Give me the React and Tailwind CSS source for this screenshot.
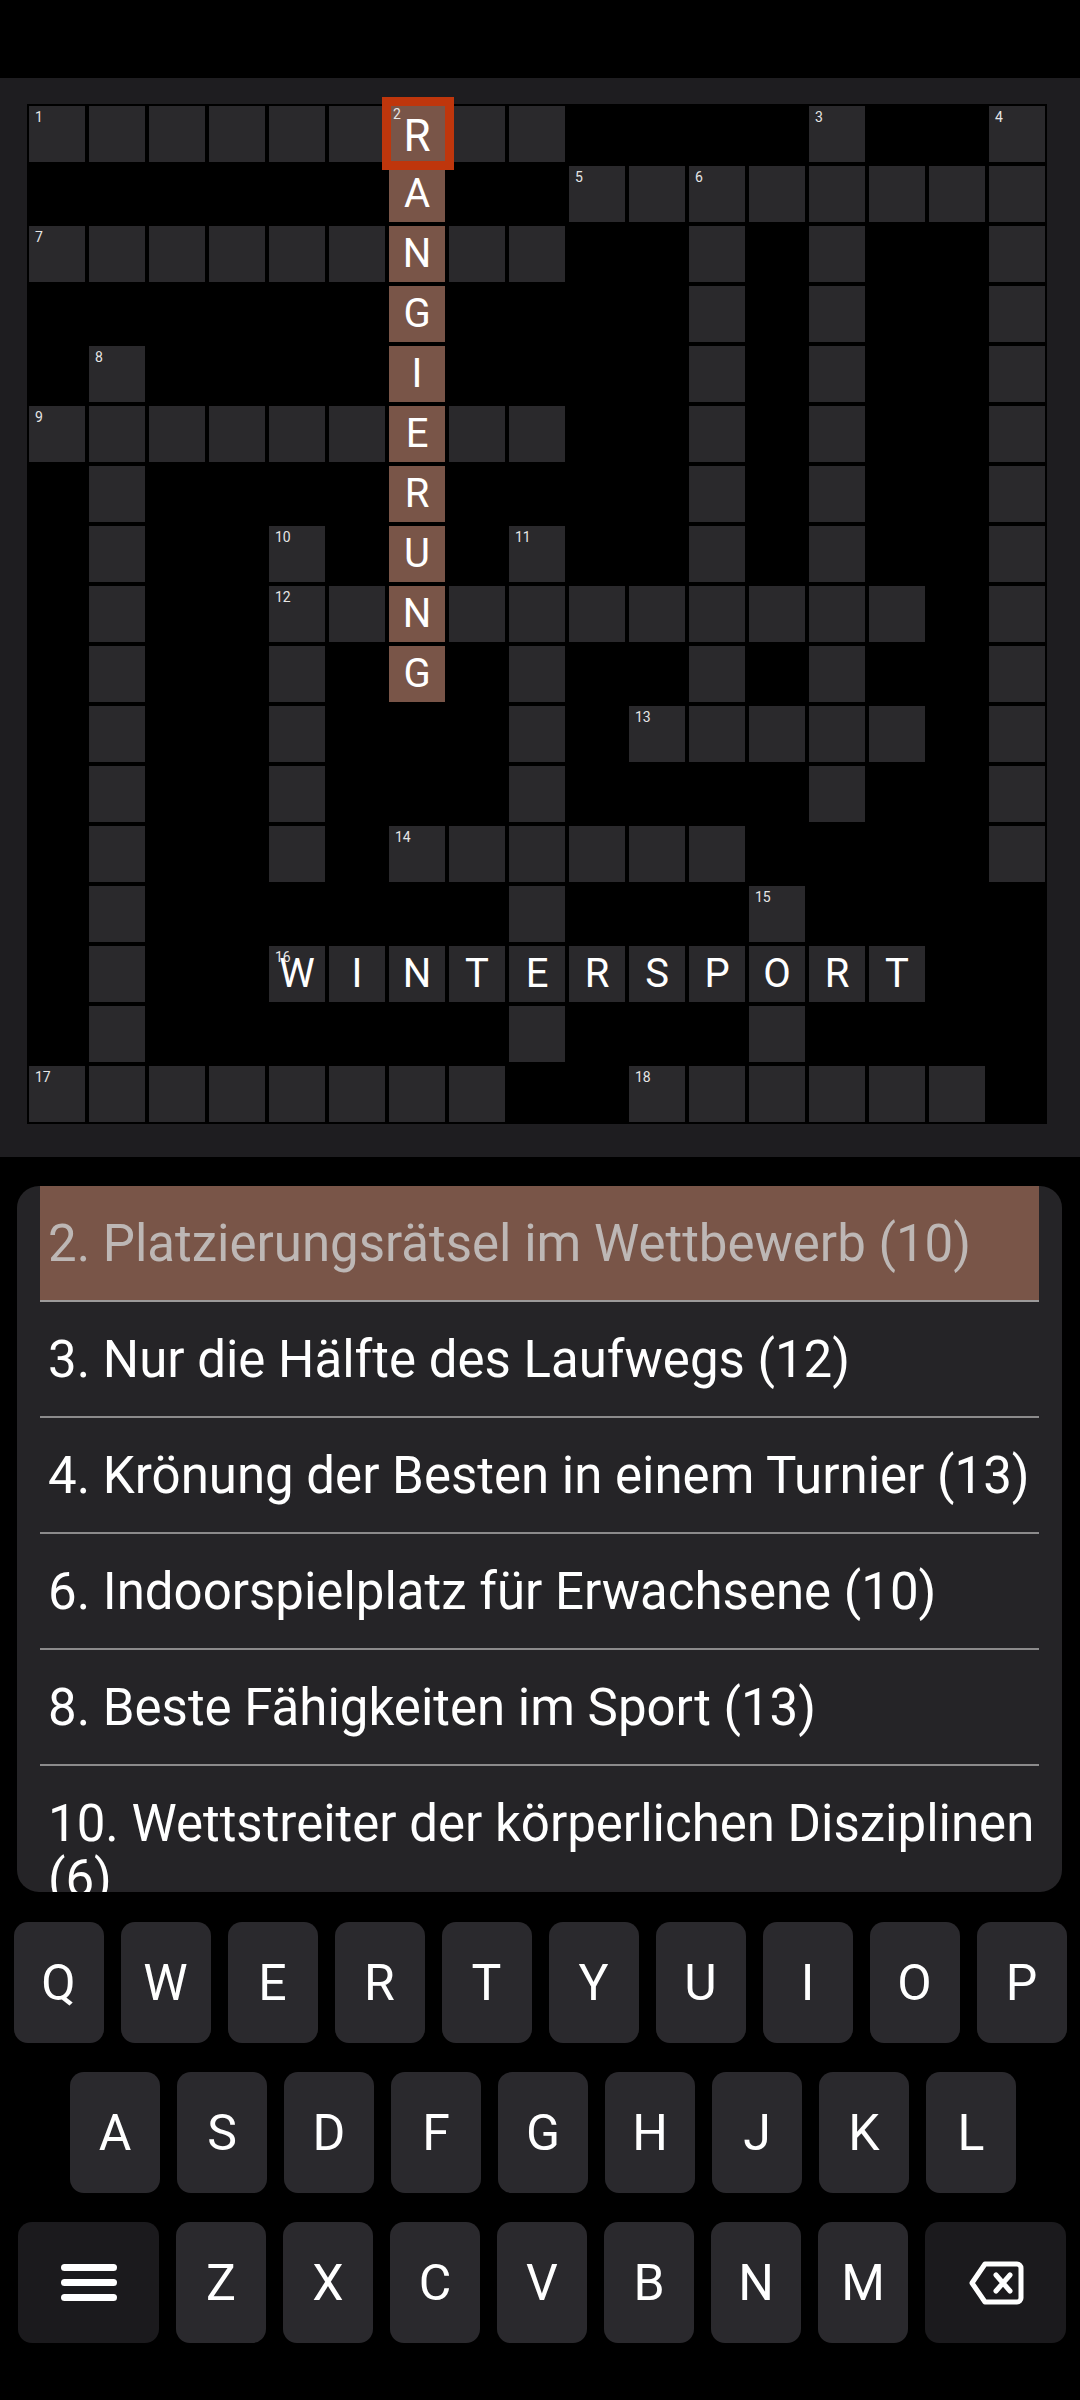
import React from "react";

const GRID = [
  "......R..####.##.",
  "######A##........",
  "......N..##.#.##.",
  "######G####.#.##.",
  "#.####I####.#.##.",
  "......E..##.#.##.",
  "#.####R####.#.##.",
  "#.##.#U#.##.#.##.",
  "#.##..N........#.",
  "#.##.#G#.##.#.##.",
  "#.##.###.#.....#.",
  "#.##.###.####.##.",
  "#.##.#......####.",
  "#.######.###.####",
  "#.##WINTERSPORT##",
  "#.######.###.####",
  "........##......#",
];

const NUMS = {
  "0,0": 1, "0,6": 2, "0,13": 3, "0,16": 4, "1,9": 5, "1,11": 6, "2,0": 7,
  "4,1": 8, "5,0": 9, "7,4": 10, "7,8": 11, "8,4": 12, "10,10": 13,
  "12,6": 14, "13,12": 15, "14,4": 16, "16,0": 17, "16,10": 18,
};

const CLUES = [
  "3. Nur die Hälfte des Laufwegs (12)",
  "4. Krönung der Besten in einem Turnier (13)",
  "6. Indoorspielplatz für Erwachsene (10)",
  "8. Beste Fähigkeiten im Sport (13)",
];

const ROW1 = ["Q", "W", "E", "R", "T", "Y", "U", "I", "O", "P"];
const ROW2 = ["A", "S", "D", "F", "G", "H", "J", "K", "L"];
const ROW3 = ["Z", "X", "C", "V", "B", "N", "M"];

function Cell({ ch, r, c }) {
  if (ch === "#") return <div className="w-[56px] h-[56px]" />;
  const brown = c === 6 && r <= 9;
  const selected = r === 0 && c === 6;
  const num = NUMS[`${r},${c}`];
  const letter = ch !== "." ? ch : "";
  return (
    <div
      className={`relative w-[56px] h-[56px] flex items-center justify-center ${
        brown ? "bg-[#795548]" : "bg-[#2a292c]"
      }`}
    >
      {selected && (
        <div className="absolute -top-[9px] -left-[7px] -right-[9px] -bottom-[8px] border-[9px] border-[#bf360c] z-10" />
      )}
      {num && (
        <span
          className={`absolute z-20 text-[14px] leading-none text-[#e6e6e6] ${
            selected ? "top-[1px] left-[4px]" : "top-[4px] left-[6px]"
          }`}
        >
          {num}
        </span>
      )}
      {letter && (
        <span
          className={`relative z-0 text-white leading-none ${
            selected ? "text-[44px] mt-[4px]" : "text-[40px]"
          }`}
        >
          {letter}
        </span>
      )}
    </div>
  );
}

function Key({ children, wide, dark }) {
  return (
    <div
      className={`h-[121px] ${wide ? "w-[141px]" : "w-[90px]"} ${
        dark ? "bg-[#1b1a1d]" : "bg-[#2a292d]"
      } rounded-[14px] flex items-center justify-center text-white text-[50px] leading-none`}
    >
      {children}
    </div>
  );
}

export default function App() {
  return (
    <div
      className="w-[1080px] min-h-[2400px] bg-black"
      style={{ fontFamily: "Roboto, 'Noto Sans', sans-serif" }}
    >
      <div className="h-[78px]" />
      <div className="bg-[#1e1d20] pt-[26px] pb-[33px] pl-[27px]">
        <div className="inline-grid grid-cols-[repeat(17,56px)] gap-[4px] p-[2px] bg-black">
          {GRID.map((row, r) =>
            row.split("").map((ch, c) => <Cell key={`${r}-${c}`} ch={ch} r={r} c={c} />)
          )}
        </div>
      </div>

      <div className="mt-[29px] ml-[17px] w-[1045px] h-[706px] rounded-[22px] bg-[#252427] overflow-hidden px-[23px]">
        <div className="bg-[#795548] border-b-2 border-[#9c9a9a] pl-[8px] pt-[30px] pb-[29px] text-[51px] leading-[55px] text-[#bdb7b5] whitespace-nowrap">
          2. Platzierungsrätsel im Wettbewerb (10)
        </div>
        {CLUES.map((t) => (
          <div
            key={t}
            className="border-b-2 border-[#8c8b8c] pl-[8px] pt-[30px] pb-[29px] text-[51px] leading-[55px] text-white whitespace-nowrap"
          >
            {t}
          </div>
        ))}
        <div className="pl-[8px] pt-[30px] pb-[29px] text-[51px] leading-[55px] text-white whitespace-nowrap">
          10. Wettstreiter der körperlichen Disziplinen
          <br />
          (6)
        </div>
      </div>

      <div className="mt-[30px] flex flex-col gap-[29px]">
        <div className="flex justify-center gap-[17px]">
          {ROW1.map((k) => (
            <Key key={k}>{k}</Key>
          ))}
        </div>
        <div className="flex justify-center gap-[17px] pl-[6px]">
          {ROW2.map((k) => (
            <Key key={k}>{k}</Key>
          ))}
        </div>
        <div className="flex justify-center gap-[17px] pl-[4px]">
          <Key wide dark>
            <svg width="56" height="37" viewBox="0 0 56 37">
              <rect x="0" y="0" width="56" height="7" rx="3.5" fill="white" />
              <rect x="0" y="15" width="56" height="7" rx="3.5" fill="white" />
              <rect x="0" y="30" width="56" height="7" rx="3.5" fill="white" />
            </svg>
          </Key>
          {ROW3.map((k) => (
            <Key key={k}>{k}</Key>
          ))}
          <Key wide dark>
            <svg width="56" height="44" viewBox="0 0 56 44" fill="none">
              <path
                d="M17 3 H49 a4 4 0 0 1 4 4 V37 a4 4 0 0 1 -4 4 H17 L4 22 Z"
                stroke="white"
                strokeWidth="5"
                strokeLinejoin="round"
              />
              <path d="M28 14 L42 30 M42 14 L28 30" stroke="white" strokeWidth="5" strokeLinecap="round" />
            </svg>
          </Key>
        </div>
      </div>
    </div>
  );
}
